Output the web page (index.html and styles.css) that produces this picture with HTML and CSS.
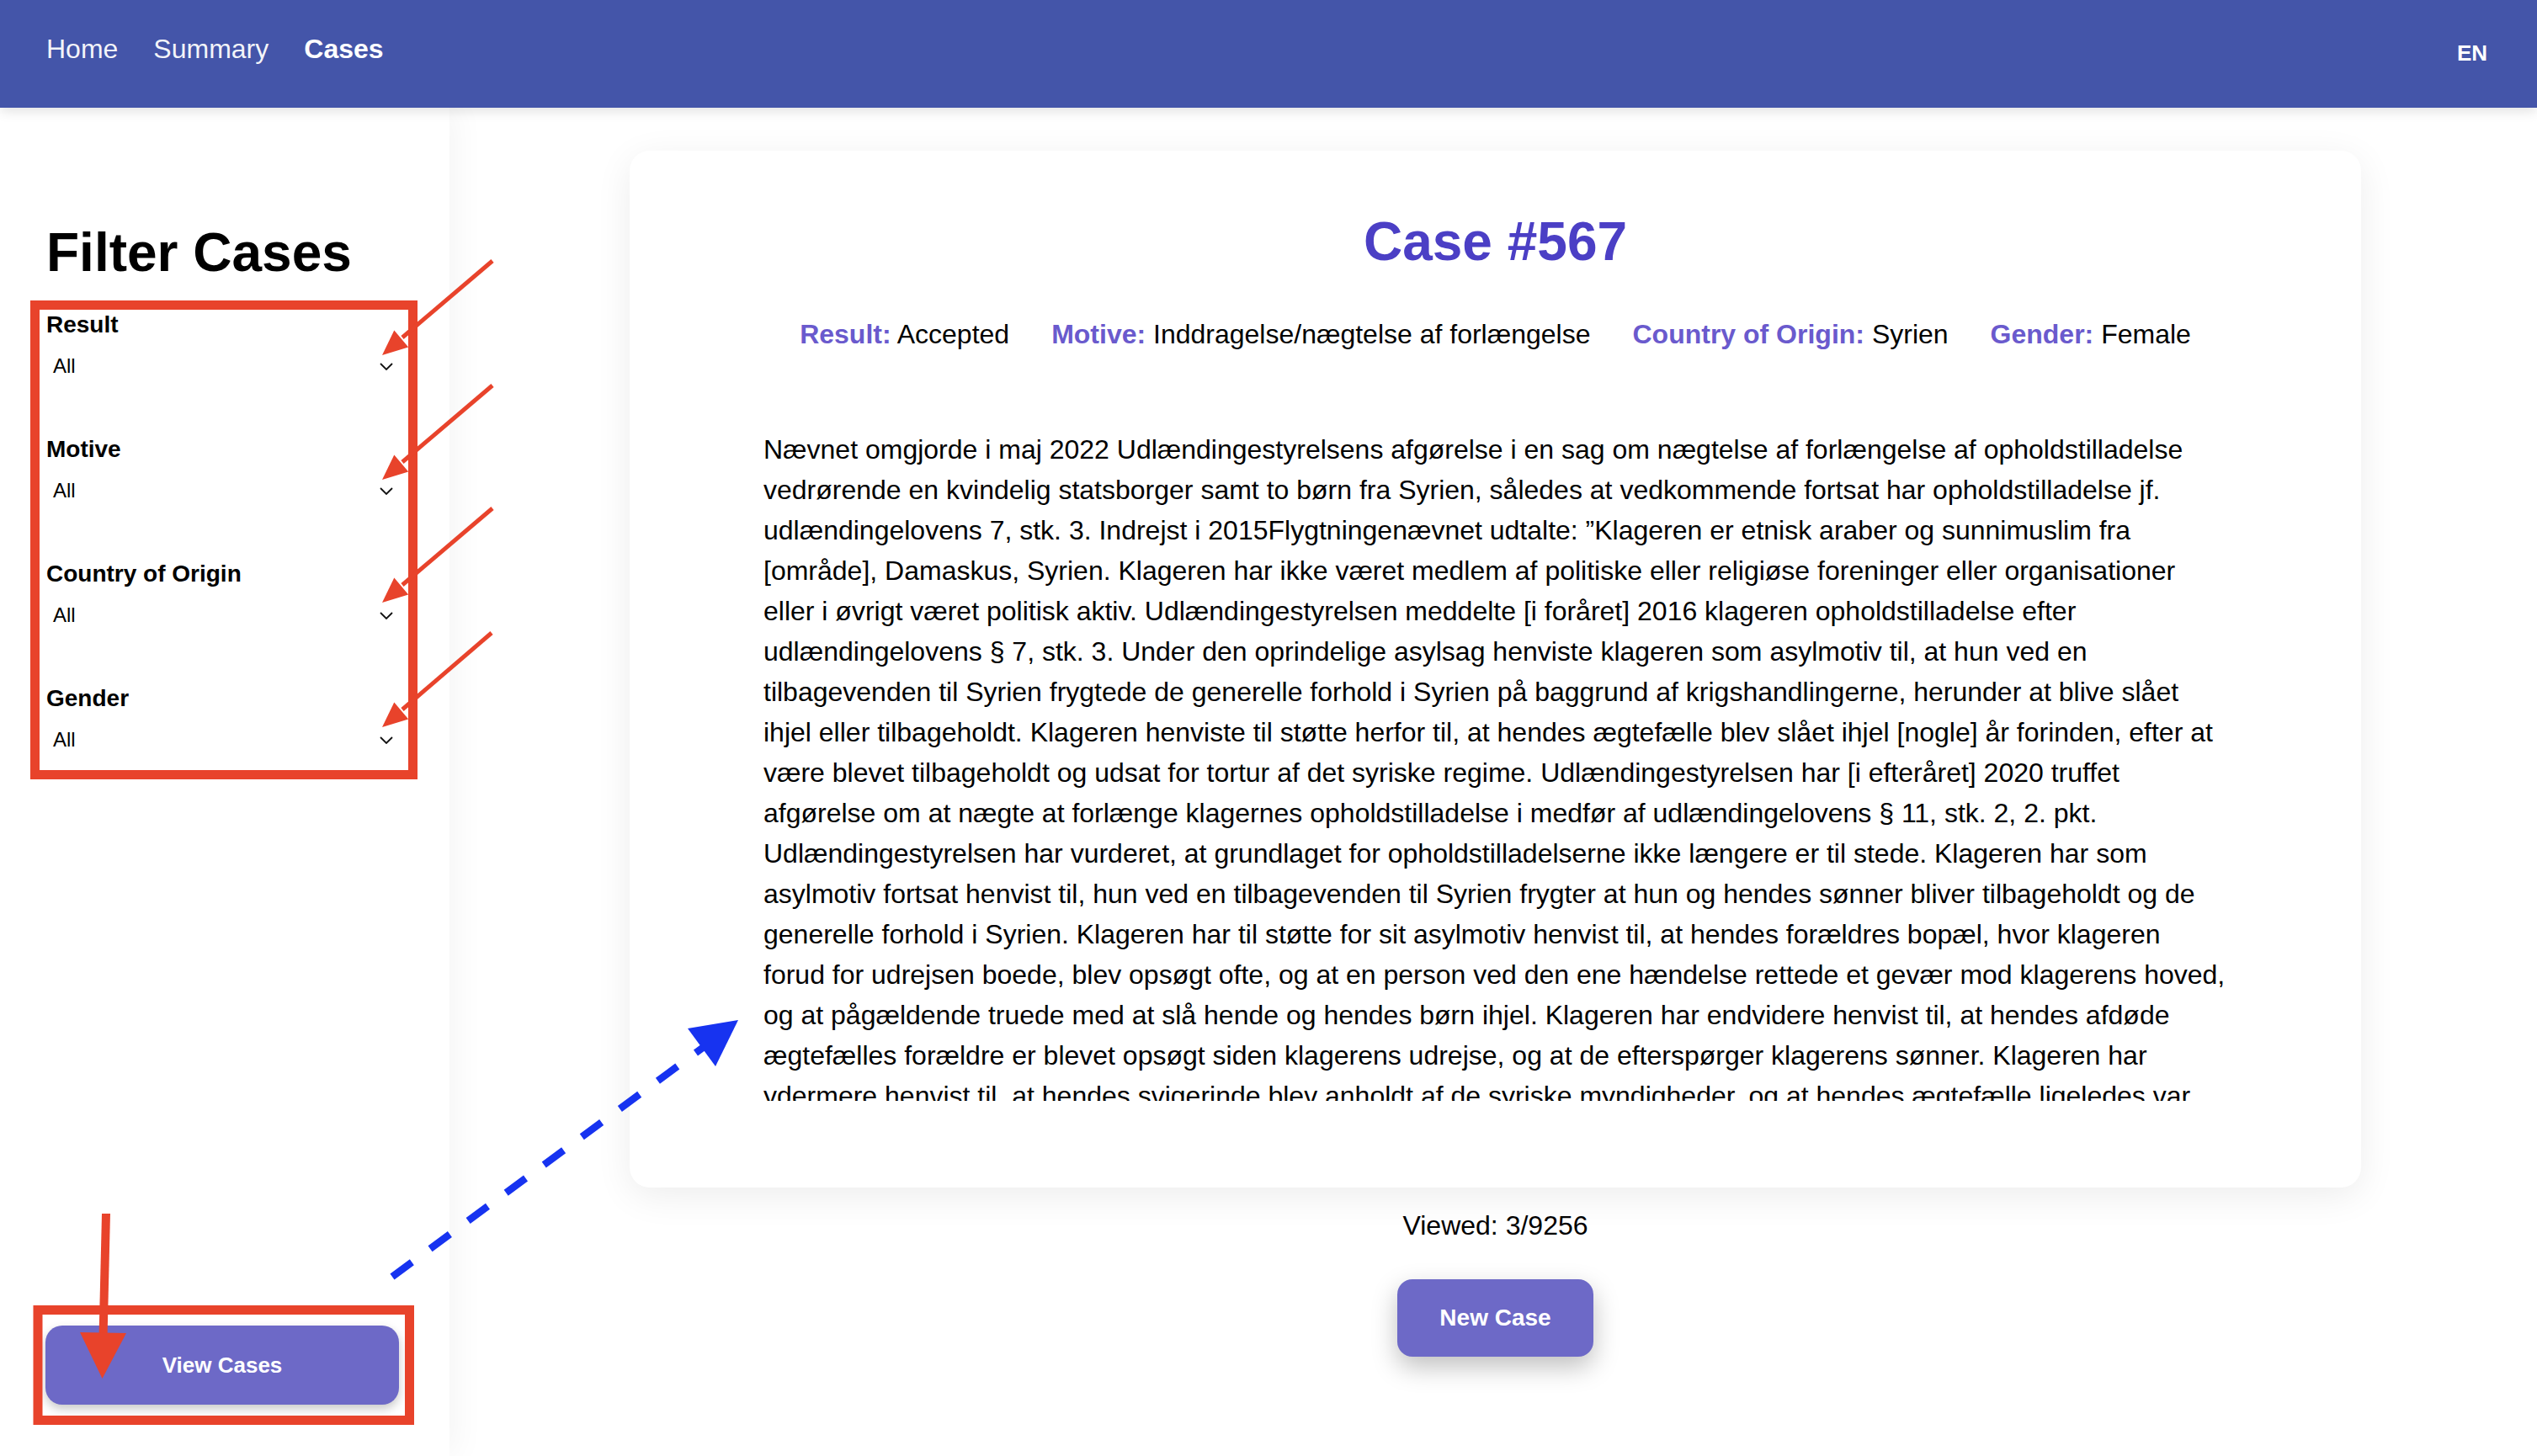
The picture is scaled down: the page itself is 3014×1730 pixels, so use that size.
FILE: index.html
```html
<!DOCTYPE html>
<html lang="da">
<head>
<meta charset="utf-8">
<title>Cases</title>
<link rel="stylesheet" href="styles.css">
</head>
<body>
<header class="topbar">
  <nav class="nav">
    <a class="nav-link">Home</a>
    <a class="nav-link">Summary</a>
    <a class="nav-link active">Cases</a>
  </nav>
  <span class="lang">EN</span>
</header>
<div class="layout">
  <aside class="sidebar">
    <h1 class="sidebar-title">Filter Cases</h1>
    <div class="filters">
      <div class="filter">
        <label class="filter-label">Result</label>
        <div class="select"><span>All</span><svg class="chev" width="16" height="9" viewBox="0 0 16 9"><polyline points="1,1 8,8 15,1"/></svg></div>
      </div>
      <div class="filter">
        <label class="filter-label">Motive</label>
        <div class="select"><span>All</span><svg class="chev" width="16" height="9" viewBox="0 0 16 9"><polyline points="1,1 8,8 15,1"/></svg></div>
      </div>
      <div class="filter">
        <label class="filter-label">Country of Origin</label>
        <div class="select"><span>All</span><svg class="chev" width="16" height="9" viewBox="0 0 16 9"><polyline points="1,1 8,8 15,1"/></svg></div>
      </div>
      <div class="filter">
        <label class="filter-label">Gender</label>
        <div class="select"><span>All</span><svg class="chev" width="16" height="9" viewBox="0 0 16 9"><polyline points="1,1 8,8 15,1"/></svg></div>
      </div>
    </div>
    <button class="btn btn-view">View Cases</button>
  </aside>
  <main class="main">
    <section class="case-card">
      <h2 class="case-title">Case #567</h2>
      <div class="case-meta">
        <span class="meta-item"><b class="meta-label">Result:</b> Accepted</span>
        <span class="meta-item"><b class="meta-label">Motive:</b> Inddragelse/nægtelse af forlængelse</span>
        <span class="meta-item"><b class="meta-label">Country of Origin:</b> Syrien</span>
        <span class="meta-item"><b class="meta-label">Gender:</b> Female</span>
      </div>
      <div class="case-text">Nævnet omgjorde i maj 2022 Udlændingestyrelsens afgørelse i en sag om nægtelse af forlængelse af opholdstilladelse vedrørende en kvindelig statsborger samt to børn fra Syrien, således at vedkommende fortsat har opholdstilladelse jf. udlændingelovens 7, stk. 3. Indrejst i 2015Flygtningenævnet udtalte: ”Klageren er etnisk araber og sunnimuslim fra [område], Damaskus, Syrien. Klageren har ikke været medlem af politiske eller religiøse foreninger eller organisationer eller i øvrigt været politisk aktiv. Udlændingestyrelsen meddelte [i foråret] 2016 klageren opholdstilladelse efter udlændingelovens § 7, stk. 3. Under den oprindelige asylsag henviste klageren som asylmotiv til, at hun ved en tilbagevenden til Syrien frygtede de generelle forhold i Syrien på baggrund af krigshandlingerne, herunder at blive slået ihjel eller tilbageholdt. Klageren henviste til støtte herfor til, at hendes ægtefælle blev slået ihjel [nogle] år forinden, efter at være blevet tilbageholdt og udsat for tortur af det syriske regime. Udlændingestyrelsen har [i efteråret] 2020 truffet afgørelse om at nægte at forlænge klagernes opholdstilladelse i medfør af udlændingelovens § 11, stk. 2, 2. pkt. Udlændingestyrelsen har vurderet, at grundlaget for opholdstilladelserne ikke længere er til stede. Klageren har som asylmotiv fortsat henvist til, hun ved en tilbagevenden til Syrien frygter at hun og hendes sønner bliver tilbageholdt og de generelle forhold i Syrien. Klageren har til støtte for sit asylmotiv henvist til, at hendes forældres bopæl, hvor klageren forud for udrejsen boede, blev opsøgt ofte, og at en person ved den ene hændelse rettede et gevær mod klagerens hoved, og at pågældende truede med at slå hende og hendes børn ihjel. Klageren har endvidere henvist til, at hendes afdøde ægtefælles forældre er blevet opsøgt siden klagerens udrejse, og at de efterspørger klagerens sønner. Klageren har ydermere henvist til, at hendes svigerinde blev anholdt af de syriske myndigheder, og at hendes ægtefælle ligeledes var</div>
    </section>
    <p class="viewed">Viewed: 3/9256</p>
    <button class="btn btn-new">New Case</button>
  </main>
</div>
<svg class="annotations" width="3014" height="1730" viewBox="0 0 3014 1730">
  <g class="red">
    <rect class="box" x="41.5" y="362.5" width="449" height="558"/>
    <rect class="box" x="45" y="1556.5" width="441.5" height="131"/>
    <g>
      <line class="ln" x1="585" y1="310" x2="478" y2="401"/>
      <polygon points="454,422 485.2,412.4 468.3,392.6"/>
    </g>
    <g transform="translate(0,148)">
      <line class="ln" x1="585" y1="310" x2="478" y2="401"/>
      <polygon points="454,422 485.2,412.4 468.3,392.6"/>
    </g>
    <g transform="translate(0,294)">
      <line class="ln" x1="585" y1="310" x2="478" y2="401"/>
      <polygon points="454,422 485.2,412.4 468.3,392.6"/>
    </g>
    <g transform="translate(0,442)">
      <line class="ln" x1="584" y1="310" x2="478" y2="401"/>
      <polygon points="454,422 485.2,412.4 468.3,392.6"/>
    </g>
    <line class="ln-thick" x1="126" y1="1442" x2="122.5" y2="1590"/>
    <polygon points="95,1583 150,1584 121.5,1638"/>
  </g>
  <g class="blue">
    <line class="dash" x1="466" y1="1517" x2="836" y2="1244"/>
    <polygon points="817,1222 877,1212 850,1267"/>
  </g>
</svg>
</body>
</html>
```

FILE: styles.css
```css
* {
  box-sizing: border-box;
}

html, body {
  margin: 0;
  padding: 0;
}

body {
  position: relative;
  width: 3014px;
  height: 1730px;
  overflow: hidden;
  background: #ffffff;
  color: #000000;
  font-family: "Liberation Sans", Arial, Helvetica, sans-serif;
}

/* ---------- top bar ---------- */
.topbar {
  position: relative;
  z-index: 2;
  height: 128px;
  background: #4455a9;
  display: flex;
  justify-content: space-between;
  align-items: flex-start;
  padding: 0 59px 0 55px;
  box-shadow: 0 4px 14px rgba(0, 0, 0, 0.12);
}

.nav {
  display: flex;
  gap: 42px;
  margin-top: 42px;
}

.nav-link {
  font-size: 32px;
  line-height: 1;
  color: rgba(255, 255, 255, 0.95);
  text-decoration: none;
}

.nav-link.active {
  font-weight: 700;
  color: #ffffff;
}

.lang {
  margin-top: 50px;
  font-size: 26px;
  line-height: 1;
  font-weight: 700;
  color: #ffffff;
}

/* ---------- layout ---------- */
.layout {
  display: flex;
  height: 1602px;
}

.sidebar {
  position: relative;
  z-index: 1;
  width: 534px;
  flex: 0 0 534px;
  background: #ffffff;
  padding: 140px 59px 61px 55px;
  display: flex;
  flex-direction: column;
  box-shadow: 8px 0 36px rgba(0, 0, 0, 0.045);
}

.sidebar-title {
  margin: 0;
  font-size: 64px;
  line-height: 1;
  font-weight: 700;
}

.filters {
  margin-top: 40px;
  display: flex;
  flex-direction: column;
  gap: 70px;
}

.filter {
  display: flex;
  flex-direction: column;
  gap: 20px;
}

.filter-label {
  font-size: 28px;
  line-height: 1;
  font-weight: 700;
}

.select {
  height: 30px;
  display: flex;
  align-items: center;
  justify-content: space-between;
  padding: 0 8px 0 8px;
  font-size: 24px;
  line-height: 30px;
}

.chev polyline {
  fill: none;
  stroke: #111111;
  stroke-width: 1.8;
}

.btn {
  border: none;
  color: #ffffff;
  background: #6d69c7;
  font-family: "Liberation Sans", Arial, Helvetica, sans-serif;
  font-weight: 700;
  display: flex;
  align-items: center;
  justify-content: center;
}

.btn-view {
  margin-top: auto;
  margin-left: -1px;
  width: 420px;
  height: 94px;
  border-radius: 20px;
  font-size: 26px;
  box-shadow: 0 5px 12px rgba(0, 0, 0, 0.22);
}

/* ---------- main ---------- */
.main {
  flex: 1;
  padding: 51px 209px 0 214px;
  display: flex;
  flex-direction: column;
  align-items: center;
}

.case-card {
  width: 100%;
  background: #ffffff;
  border-radius: 24px;
  padding: 76px 159px 103px;
  box-shadow: 0 10px 44px rgba(0, 0, 0, 0.075);
}

.case-title {
  margin: 0;
  text-align: center;
  font-size: 64px;
  line-height: 1;
  font-weight: 700;
  color: #4b3fc5;
}

.case-meta {
  margin-top: 62px;
  display: flex;
  justify-content: center;
  gap: 50px;
  font-size: 32px;
  line-height: 1;
  white-space: nowrap;
}

.meta-label {
  color: #6a5acd;
  font-weight: 700;
}

.case-text {
  margin-top: 97px;
  height: 798px;
  overflow: hidden;
  font-size: 32px;
  line-height: 48px;
}

.viewed {
  margin: 29px 0 0;
  font-size: 32px;
  line-height: 1;
}

.btn-new {
  margin-top: 48px;
  height: 92px;
  padding: 0 50px;
  border-radius: 18px;
  font-size: 28px;
  box-shadow: 0 12px 30px rgba(0, 0, 0, 0.25);
}

/* ---------- annotation overlay ---------- */
.annotations {
  position: absolute;
  top: 0;
  left: 0;
  z-index: 10;
  pointer-events: none;
}

.red .box {
  fill: none;
  stroke: #e8432b;
  stroke-width: 11;
}

.red .ln {
  stroke: #e8432b;
  stroke-width: 5;
}

.red .ln-thick {
  stroke: #e8432b;
  stroke-width: 10;
}

.red polygon {
  fill: #e8432b;
}

.blue .dash {
  stroke: #1733f0;
  stroke-width: 8.5;
  stroke-dasharray: 29 27;
}

.blue polygon {
  fill: #1733f0;
}
```
